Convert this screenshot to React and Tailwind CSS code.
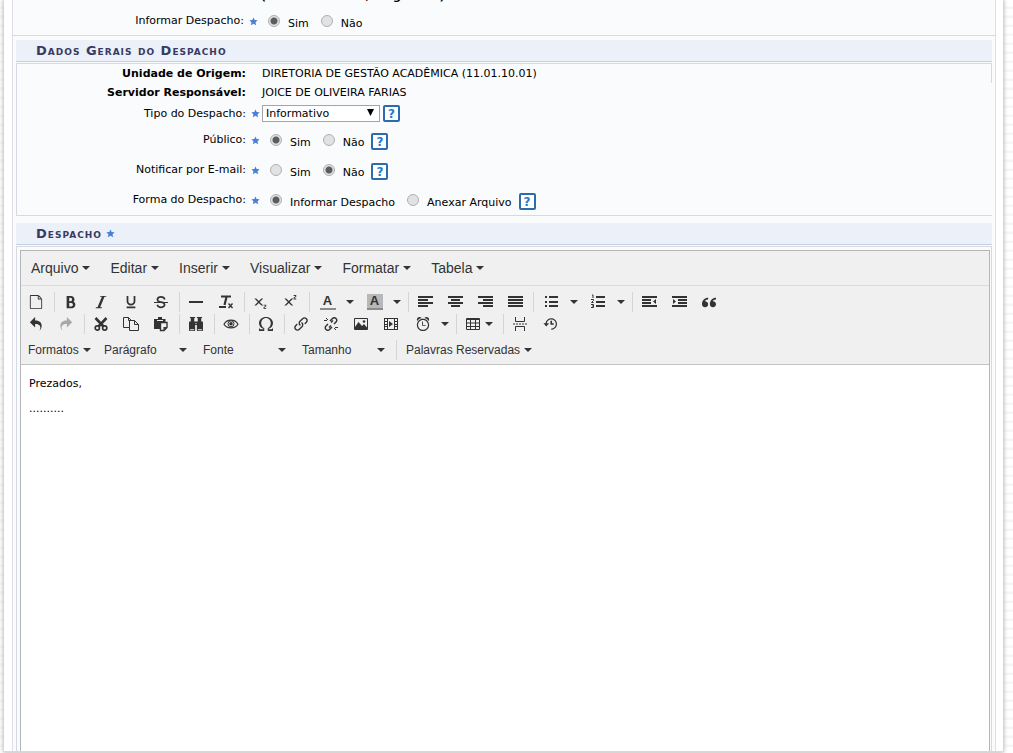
import { useState } from "react";
import {
  ImFileEmpty,
  ImBold,
  ImItalic,
  ImUnderline,
  ImStrikethrough,
  ImSubscript,
  ImSuperscript,
  ImQuotesLeft,
  ImUndo2,
  ImRedo2,
  ImBinoculars,
  ImOmega,
  ImLink,
  ImAlarm,
  ImHistory,
} from "react-icons/im";

const menus = ["Arquivo", "Editar", "Inserir", "Visualizar", "Formatar", "Tabela"];

function Caret() {
  return (
    <svg width="8" height="4" viewBox="0 0 8 4" className="shrink-0" aria-hidden="true">
      <path d="M0 0h8L4 4z" fill="currentColor" />
    </svg>
  );
}

// Small 15x11 icons made of horizontal bars: [x, y, width]
function Bars({ rows, children }) {
  return (
    <svg width="15" height="11" viewBox="0 0 15 11" fill="currentColor" aria-hidden="true">
      {rows.map(([x, y, w]) => (
        <rect key={y} x={x} y={y} width={w} height="2" />
      ))}
      {children}
    </svg>
  );
}

function BulletList() {
  return (
    <Bars rows={[[5, 0, 9], [5, 5, 9], [5, 9, 9]]}>
      <path d="M1 0h2v2H1zM1 5h2v2H1zM1 9h2v2H1z" />
    </Bars>
  );
}

function NumberList() {
  return (
    <svg width="15" height="15" viewBox="0 0 15 15" fill="currentColor" aria-hidden="true">
      <path d="M5 2h9v2H5zM5 7h9v2H5zM5 11h9v2H5z" />
      <path d="M1 1h1v3M0 5.500h2.500v1L.5 8.500h2M0 10.500h2.500v3H0M1 12h1.500" fill="none" stroke="currentColor" />
    </svg>
  );
}

function ClearFormat() {
  return (
    <svg width="16" height="16" viewBox="0 0 16 16" fill="none" stroke="currentColor" aria-hidden="true">
      <path d="M3 2.500h10" strokeWidth="2" />
      <path d="M8.500 3L6.500 11" strokeWidth="2.200" />
      <path d="M1 13h7" strokeWidth="2" />
      <path d="M10.500 9.500l4 4.500M14.500 9.500l-4 4.500" strokeWidth="1.400" />
    </svg>
  );
}

function Scissors() {
  return (
    <svg width="16" height="16" viewBox="0 0 16 16" fill="none" stroke="currentColor" aria-hidden="true">
      <path d="M2.500 2l8 8.500M13.500 2l-8 8.500" strokeWidth="2.600" />
      <circle cx="4.300" cy="12" r="2.100" strokeWidth="1.700" />
      <circle cx="11.700" cy="12" r="2.100" strokeWidth="1.700" />
    </svg>
  );
}

function Copy() {
  return (
    <svg width="16" height="16" viewBox="0 0 16 16" fill="none" stroke="currentColor" aria-hidden="true">
      <path d="M6.500 11.500h-6v-10h5l3 3M5.500 1.500v3h3" />
      <path d="M6.500 4.500h5l4 4v6h-9zM11.500 4.500v4h4" />
    </svg>
  );
}

function Paste() {
  return (
    <svg width="16" height="16" viewBox="0 0 16 16" aria-hidden="true">
      <path d="M1 3h4V1h4v2h3.500v3H7v7H1z" fill="currentColor" />
      <path d="M4 4.500h6" stroke="#f0f0f0" />
      <path d="M7.500 6.500h6.500v5l-3 3H7.500z" fill="#f0f0f0" stroke="currentColor" strokeWidth="1.400" />
      <path d="M14 11l-3.500 3.500V11z" fill="currentColor" />
    </svg>
  );
}

function Eye() {
  return (
    <svg width="16" height="16" viewBox="0 0 16 16" fill="none" stroke="currentColor" aria-hidden="true">
      <path d="M1 8.200C4 2.800 12 2.800 15 8.200 12 13 4 13 1 8.200z" strokeWidth="1.200" />
      <circle cx="8" cy="7.800" r="3" strokeWidth="1" />
      <circle cx="8" cy="7.800" r="1.800" fill="currentColor" stroke="none" />
    </svg>
  );
}

function Unlink() {
  return (
    <svg width="16" height="16" viewBox="0 0 16 16" fill="none" stroke="currentColor" strokeWidth="1.500" aria-hidden="true">
      <path d="M7 5l2.500-2.500a2.400 2.400 0 0 1 3.500 0 2.400 2.400 0 0 1 0 3.500l-2 2M9 11l-2.500 2.500a2.400 2.400 0 0 1-3.500 0 2.400 2.400 0 0 1 0-3.500l2-2M8 6.500l2-2M6 11.500l2-2" />
      <path d="M1 4.500h3M3 2l2 2M15 11.500h-3M13 14l-2-2" strokeWidth="1" />
    </svg>
  );
}

function Picture() {
  return (
    <svg width="16" height="16" viewBox="0 0 16 16" aria-hidden="true">
      <path d="M1.500 2.500h13v11h-13z" fill="none" stroke="currentColor" />
      <path d="M2 13v-2l3.500-5L9 10l2-2 3 3.500V13z" fill="currentColor" />
      <circle cx="11" cy="5.500" r="1.300" fill="currentColor" />
    </svg>
  );
}

function Film() {
  return (
    <svg width="16" height="16" viewBox="0 0 16 16" fill="currentColor" aria-hidden="true">
      <path fillRule="evenodd" d="M1 2h14v12H1zM2 3v2h2V3zM2 6v2h2V6zM2 9v1h2V9zM2 11v2h2v-2zM12 3v2h2V3zM12 6v2h2V6zM12 9v1h2V9zM12 11v2h2v-2zM5 3v10h6V3z" />
      <path d="M6 5l4 3-4 3z" />
    </svg>
  );
}

function TableGrid() {
  return (
    <svg width="16" height="14" viewBox="0 0 16 14" fill="none" stroke="currentColor" aria-hidden="true">
      <path d="M1.500 1.500h13v11h-13zM1 2.500h14M1 6h14M1 9.500h14M5.500 2v10M10.500 2v10" />
    </svg>
  );
}

function PageBreak() {
  return (
    <svg width="16" height="16" viewBox="0 0 16 16" fill="none" stroke="currentColor" aria-hidden="true">
      <path d="M3.500 1v4.500h9V1M3.500 15v-4.500h9V15" />
      <path d="M1 8h14" strokeDasharray="2 1" />
    </svg>
  );
}

function Tool({ label, faded, shifted, children }) {
  return (
    <button
      type="button"
      aria-label={label}
      title={label}
      className={
        "flex h-[22px] w-[30px] shrink-0 items-center justify-center text-[14px] " +
        (faded ? "text-[#a8a8a8] " : "") +
        (shifted ? "pl-[3px]" : "")
      }
    >
      {children}
    </button>
  );
}

function Drop({ label }) {
  return (
    <button type="button" aria-label={label} className="flex h-[22px] w-[17px] shrink-0 items-center justify-center">
      <Caret />
    </button>
  );
}

function Separator() {
  return <span className="ml-[3px] mr-px h-5 w-px shrink-0 bg-[#d5d5d5]" />;
}

function Letter({ marked }) {
  return (
    <span
      className={
        "flex h-4 w-4 items-center justify-center border-b-2 border-[#8c8c8c] text-[13px] leading-3 font-bold " +
        (marked ? "bg-[#b8b8b8]" : "")
      }
    >
      A
    </span>
  );
}

function Star() {
  return (
    <svg width="9" height="9" viewBox="0 0 10 10" className="shrink-0" aria-hidden="true">
      <path d="M5 .5l1.300 2.900 3.200.3L7.200 6 8 9.300 5 7.600 2 9.300 2.800 6 .5 3.700l3.200-.3z" fill="#4a7fd6" />
    </svg>
  );
}

function Help() {
  return (
    <button
      type="button"
      aria-label="Ajuda"
      className="flex h-[17px] w-[17px] shrink-0 items-center justify-center rounded-xs border-2 border-[#2a6cae] bg-white text-[12px] leading-3 font-bold text-[#2878cc]"
    >
      ?
    </button>
  );
}

function Radio({ name, text, checked, onChange }) {
  return (
    <label className="flex items-start">
      <input
        type="radio"
        name={name}
        checked={checked}
        onChange={onChange}
        className="mr-2 h-3 w-3 appearance-none rounded-full border border-[#b0b0b0] bg-[#e2e2e2] checked:bg-[radial-gradient(circle,#5c5c5c_0,#5c5c5c_3px,#e2e2e2_4px)]"
      />
      <span className="pt-[2px] leading-[14px]">{text}</span>
    </label>
  );
}

function RadioRow({ label, name, options, initial, help }) {
  const [value, setValue] = useState(initial);
  return (
    <div role="radiogroup" aria-label={label} className="flex h-[30px] items-center">
      <span className="w-[229px] shrink-0 text-right">{label}:</span>
      <span className="ml-[5px] flex w-[19px] shrink-0">
        <Star />
      </span>
      <div className="flex h-3 items-start gap-3">
        {options.map((o) => (
          <Radio key={o} name={name} text={o} checked={value === o} onChange={() => setValue(o)} />
        ))}
      </div>
      {help && (
        <span className="ml-[7px] pt-[3px]">
          <Help />
        </span>
      )}
    </div>
  );
}

function SectionTitle({ children }) {
  return (
    <h2 className="mb-px flex h-[22px] items-center gap-1 border-b border-[#c5d0e2] bg-[#ebf0f9] pl-5 text-[13px] font-bold tracking-[1px] text-[#3a3a62] [font-variant:small-caps]">
      {children}
    </h2>
  );
}

function ListButton({ text, width }) {
  return (
    <button type="button" className={"flex shrink-0 items-center justify-between " + width}>
      <span>{text}</span>
      <Caret />
    </button>
  );
}

function Editor() {
  return (
    <div className="flex flex-1 flex-col border-x border-t border-[#b5b5b5] bg-white font-['Liberation_Sans',Arial,sans-serif] text-[#333]">
      <div className="flex h-[35px] items-center gap-5 border-b border-[#dcdcdc] bg-[#f0f0f0] pl-[10px] text-[14px]">
        {menus.map((m) => (
          <button key={m} type="button" className="flex items-center gap-1">
            {m}
            <Caret />
          </button>
        ))}
      </div>

      <div className="h-[79px] border-b border-[#c4c4c4] bg-[#f0f0f0] pt-1">
        <div className="flex h-[23px] items-center">
          <Tool label="Novo documento"><ImFileEmpty /></Tool>
          <Separator />
          <Tool label="Negrito"><ImBold /></Tool>
          <Tool label="Itálico"><ImItalic /></Tool>
          <Tool label="Sublinhado"><ImUnderline /></Tool>
          <Tool label="Riscado"><ImStrikethrough /></Tool>
          <Separator />
          <Tool label="Linha horizontal"><span className="h-[2px] w-[14px] bg-[#333]" /></Tool>
          <Tool label="Limpar formatação"><ClearFormat /></Tool>
          <Separator />
          <Tool label="Subscrito"><ImSubscript /></Tool>
          <Tool label="Sobrescrito"><ImSuperscript /></Tool>
          <Separator />
          <Tool label="Cor do texto" shifted><Letter /></Tool>
          <Drop label="Cores do texto" />
          <Tool label="Cor do fundo" shifted><Letter marked /></Tool>
          <Drop label="Cores do fundo" />
          <Separator />
          <Tool label="Alinhar à esquerda"><Bars rows={[[0, 0, 15], [0, 3, 10], [0, 6, 15], [0, 9, 10]]} /></Tool>
          <Tool label="Centralizar"><Bars rows={[[0, 0, 15], [3, 3, 9], [0, 6, 15], [3, 9, 9]]} /></Tool>
          <Tool label="Alinhar à direita"><Bars rows={[[0, 0, 15], [5, 3, 10], [0, 6, 15], [5, 9, 10]]} /></Tool>
          <Tool label="Justificar"><Bars rows={[[0, 0, 15], [0, 3, 15], [0, 6, 15], [0, 9, 15]]} /></Tool>
          <Separator />
          <Tool label="Lista não ordenada" shifted><BulletList /></Tool>
          <Drop label="Estilos de lista" />
          <Tool label="Lista ordenada" shifted><NumberList /></Tool>
          <Drop label="Estilos de numeração" />
          <Separator />
          <Tool label="Diminuir recuo">
            <Bars rows={[[0, 0, 15], [0, 3, 9], [0, 6, 9], [0, 9, 15]]}><path d="M14 3v5l-3-2.500z" /></Bars>
          </Tool>
          <Tool label="Aumentar recuo">
            <Bars rows={[[0, 0, 15], [6, 3, 9], [6, 6, 9], [0, 9, 15]]}><path d="M1 3v5l3-2.500z" /></Bars>
          </Tool>
          <Tool label="Citação"><ImQuotesLeft /></Tool>
        </div>

        <div className="flex h-[22px] items-center">
          <Tool label="Desfazer"><ImUndo2 /></Tool>
          <Tool label="Refazer" faded><ImRedo2 /></Tool>
          <Separator />
          <Tool label="Recortar"><Scissors /></Tool>
          <Tool label="Copiar"><Copy /></Tool>
          <Tool label="Colar"><Paste /></Tool>
          <Separator />
          <Tool label="Localizar"><ImBinoculars /></Tool>
          <Separator />
          <Tool label="Pré-visualizar"><Eye /></Tool>
          <Separator />
          <Tool label="Caractere especial"><ImOmega /></Tool>
          <Separator />
          <Tool label="Inserir link"><ImLink /></Tool>
          <Tool label="Remover link"><Unlink /></Tool>
          <Tool label="Inserir imagem"><Picture /></Tool>
          <Tool label="Inserir vídeo"><Film /></Tool>
          <Tool label="Inserir data" shifted><ImAlarm /></Tool>
          <Drop label="Formatos de data" />
          <Separator />
          <button type="button" aria-label="Tabela" className="flex h-[22px] w-[42px] shrink-0 items-center justify-center gap-1">
            <TableGrid />
            <Caret />
          </button>
          <Separator />
          <Tool label="Quebra de página"><PageBreak /></Tool>
          <Tool label="Restaurar rascunho"><ImHistory /></Tool>
        </div>

        <div className="flex h-[29px] items-center pl-[7px] text-[12px]">
          <ListButton text="Formatos" width="w-[63px] mr-[13px]" />
          <ListButton text="Parágrafo" width="w-[83px] mr-4" />
          <ListButton text="Fonte" width="w-[83px] mr-4" />
          <ListButton text="Tamanho" width="w-[83px] mr-2" />
          <Separator />
          <ListButton text="Palavras Reservadas" width="w-[126px] ml-2" />
        </div>
      </div>

      <div
        contentEditable
        suppressContentEditableWarning
        role="textbox"
        aria-label="Despacho"
        className="flex-1 p-2 pt-[11px] font-['DejaVu_Sans',Verdana,sans-serif] text-[11px] leading-4 text-black outline-none"
      >
        <p className="mb-[9px]">Prezados,</p>
        <p>..........</p>
      </div>
    </div>
  );
}

function App() {
  const [tipo, setTipo] = useState("Informativo");

  return (
    <div className="h-screen overflow-hidden bg-[repeating-linear-gradient(#fff_0,#fff_6px,#f6f6f6_7px,#f6f6f6_9px)] pr-[10px] pb-px pl-1 font-['DejaVu_Sans',Verdana,sans-serif] text-[11px] text-black">
      <main className="flex h-full flex-col border-b border-[#d8d8d8] bg-white pr-[7px] pl-2 shadow-[0_0_4px_1px_#bbb]">
        <div className="flex flex-1 flex-col border-x border-[#dcdfe5] bg-[#f9fbfd]">
          {/* tail of the previous form, scrolled under the top edge */}
          <div className="flex h-[6px] items-end overflow-hidden pl-[248px]">
            <span className="leading-[18px] font-bold">(4000 caracteres/0 digitados)</span>
          </div>
          <div className="-mb-px pl-[2px]">
            <RadioRow label="Informar Despacho" name="informar" options={["Sim", "Não"]} initial="Sim" />
          </div>

          <div className="flex flex-1 flex-col border-t border-[#d8dae0] pt-1 pr-[3px] pl-[3px]">
            <SectionTitle>Dados Gerais do Despacho</SectionTitle>
            <section className="mb-[7px] border-t border-b border-l border-[#d5d9e2]">
              <div className="flex h-[19px] items-center border-r border-[#d5d9e2] pt-[2px]">
                <span className="w-[229px] shrink-0 text-right font-bold">Unidade de Origem:</span>
                <span className="ml-4">DIRETORIA DE GESTÃO ACADÊMICA (11.01.10.01)</span>
              </div>
              <div className="flex h-[19px] items-center pt-[2px]">
                <span className="w-[229px] shrink-0 text-right font-bold">Servidor Responsável:</span>
                <span className="ml-4">JOICE DE OLIVEIRA FARIAS</span>
              </div>
              <div className="flex h-[23px] items-center">
                <label htmlFor="tipo" className="w-[229px] shrink-0 pt-px text-right">Tipo do Despacho:</label>
                <span className="mr-[2px] ml-[5px] flex">
                  <Star />
                </span>
                <div className="relative mr-[3px]">
                  <select
                    id="tipo"
                    value={tipo}
                    onChange={(e) => setTipo(e.target.value)}
                    className="block h-[17px] w-[118px] appearance-none border border-[#a5a5a5] bg-white pl-[3px] leading-[14px]"
                  >
                    <option>Informativo</option>
                    <option>Decisório</option>
                  </select>
                  <svg width="7" height="7" viewBox="0 0 7 7" className="pointer-events-none absolute top-1 right-[6px]" aria-hidden="true">
                    <path d="M0 0h7L3.500 7z" fill="black" />
                  </svg>
                </div>
                <Help />
              </div>
              <RadioRow label="Público" name="publico" options={["Sim", "Não"]} initial="Sim" help />
              <RadioRow label="Notificar por E-mail" name="notificar" options={["Sim", "Não"]} initial="Não" help />
              <RadioRow label="Forma do Despacho" name="forma" options={["Informar Despacho", "Anexar Arquivo"]} initial="Informar Despacho" help />
            </section>

            <SectionTitle>
              Despacho <Star />
            </SectionTitle>
            <section className="flex flex-1 flex-col border-x border-t border-[#d5d9e2] pt-[3px] pr-px pl-[3px]">
              <Editor />
            </section>
          </div>
        </div>
      </main>
    </div>
  );
}

export default App;
